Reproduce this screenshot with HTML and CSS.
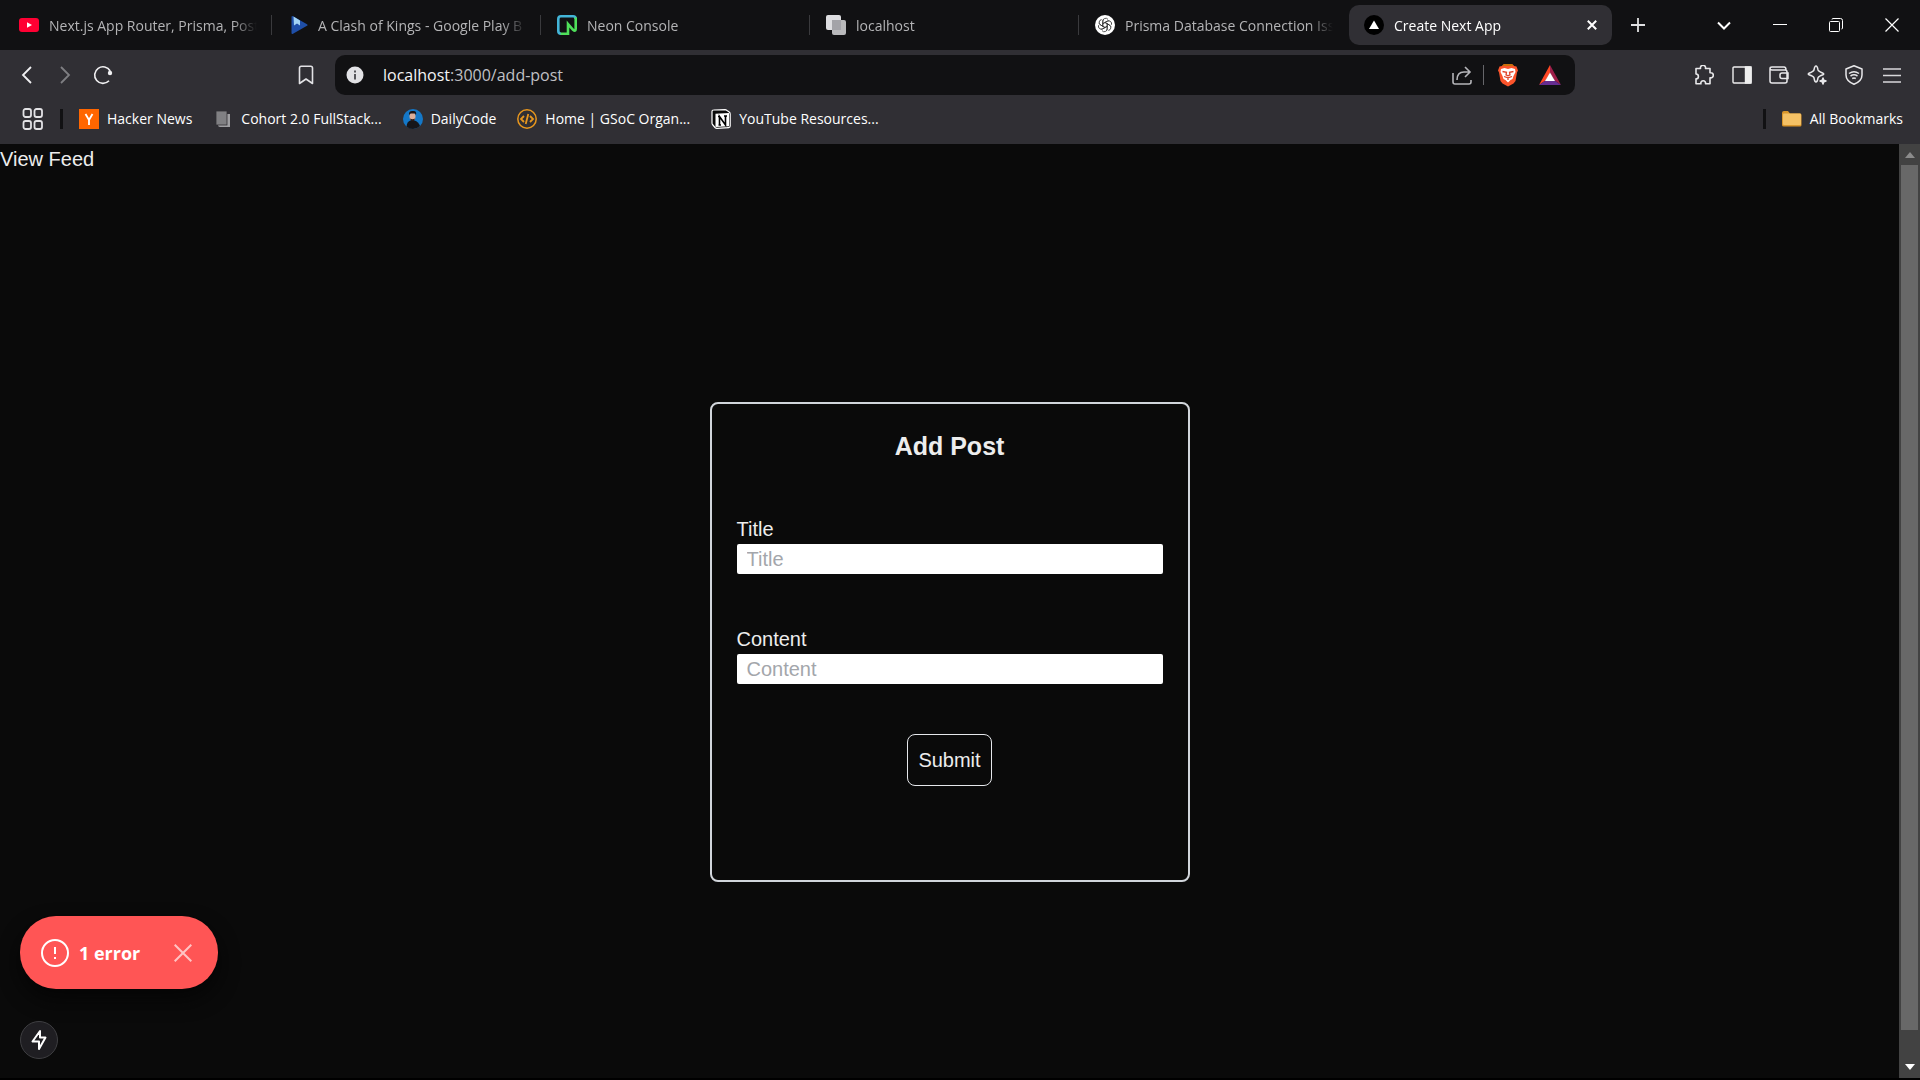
FILE: index.html
```html
<!DOCTYPE html>
<html lang="en">
<head>
    <meta charset="UTF-8">
    <meta name="viewport" content="width=device-width, initial-scale=1.0">
    <title>Create Next App</title>
    <link rel="stylesheet" href="styles.css">
</head>
<body>
    <div class="browser">

        <!-- tab strip -->
        <header class="tab-strip">
            <ul class="tabs">
                <li class="tab">
                    <a href="#" class="tab-body">
                        <svg class="favicon" viewBox="0 0 20 20"><rect y="3" width="20" height="14" rx="3" fill="#ff0033"/><path d="M8 7.2l5 2.8-5 2.8z" fill="#fff"/></svg>
                        <span class="tab-title">Next.js App Router, Prisma, Post</span>
                    </a>
                    <span class="tab-divider"></span>
                </li>
                <li class="tab">
                    <a href="#" class="tab-body">
                        <svg class="favicon" viewBox="0 0 20 20"><path d="M3.500 2Q3.500 .6 5 1.200l14 8q1.200 .8 0 1.600l-14 8Q3.500 19.400 3.500 18z" fill="#1f4fa8"/><path d="M5.500 1.500l6.500 4v5L9 8.500l-3 2z" fill="#a3d4f5"/></svg>
                        <span class="tab-title">A Clash of Kings - Google Play B</span>
                    </a>
                    <span class="tab-divider"></span>
                </li>
                <li class="tab">
                    <a href="#" class="tab-body">
                        <svg class="favicon" viewBox="0 0 20 20" fill="none" stroke-width="2.600"><path d="M4 18.700Q1.300 18.700 1.300 16V4Q1.300 1.300 4 1.300h12q2.700 0 2.700 2.700" stroke="#43b5d8"/><path d="M3.500 18.700h7.500V9l5 5.800q2.700 2.200 2.700-1V2.500" stroke="#4fe05a"/></svg>
                        <span class="tab-title">Neon Console</span>
                    </a>
                    <span class="tab-divider"></span>
                </li>
                <li class="tab">
                    <a href="#" class="tab-body">
                        <svg class="favicon" viewBox="0 0 20 20"><rect width="15" height="15" rx="2" fill="#dddde0"/><rect x="6" y="5" width="14" height="15" rx="2" fill="#b9b9bb"/><rect x="6" y="5" width="9" height="10" fill="#a3a3a8"/></svg>
                        <span class="tab-title">localhost</span>
                    </a>
                    <span class="tab-divider"></span>
                </li>
                <li class="tab">
                    <a href="#" class="tab-body">
                        <svg class="favicon" viewBox="0 0 20 20"><circle cx="10" cy="10" r="10" fill="#fff"/><g fill="none" stroke="#333" stroke-width=".8"><path id="knot" d="M7.800 11.300V6.200a2.900 2.900 0 0 1 5.200-1.800M7.800 8.700L12.200 6.200a2.900 2.900 0 0 1 2 -.3"/><use href="#knot" transform="rotate(60 10 10)"/><use href="#knot" transform="rotate(120 10 10)"/><use href="#knot" transform="rotate(180 10 10)"/><use href="#knot" transform="rotate(240 10 10)"/><use href="#knot" transform="rotate(300 10 10)"/></g></svg>
                        <span class="tab-title">Prisma Database Connection Iss</span>
                    </a>
                </li>
                <li class="tab active">
                    <a href="#" class="tab-body">
                        <svg class="favicon" viewBox="0 0 20 20"><circle cx="10" cy="10" r="10" fill="#000"/><path d="M10 5.500l5 8.500H5z" fill="#fff"/></svg>
                        <span class="tab-title">Create Next App</span>
                        <svg class="tab-close" viewBox="0 0 10 10" fill="none" stroke="#fff" stroke-width="2"><path d="M.8.8l8.400 8.400M9.200.8L.8 9.200"/></svg>
                    </a>
                </li>
            </ul>
            <button class="new-tab" aria-label="New tab">
                <svg width="14" height="14" viewBox="0 0 14 14" stroke="#e0e0e2" stroke-width="1.800"><path d="M7 0v14M0 7h14"/></svg>
            </button>
            <div class="window-controls">
                <button aria-label="Search tabs"><svg width="14" height="14" viewBox="0 0 14 14" fill="none" stroke="#fff" stroke-width="2"><path d="M1 4.500l6 6 6-6"/></svg></button>
                <button aria-label="Minimize"><svg width="14" height="14" viewBox="0 0 14 14" stroke="#fff"><path d="M0 6.500h14"/></svg></button>
                <button aria-label="Restore"><svg width="14" height="14" viewBox="0 0 14 14" fill="none" stroke="#fff"><rect x=".5" y="3.500" width="10" height="10" rx="1"/><path d="M3 1.500Q3 .5 4 .5h7.500q2 0 2 2V10q0 1-1 1"/></svg></button>
                <button aria-label="Close"><svg width="14" height="14" viewBox="0 0 14 14" stroke="#fff" stroke-width="1.200"><path d="M.5.5l13 13M13.500.5l-13 13"/></svg></button>
            </div>
        </header>

        <!-- address bar row -->
        <div class="toolbar">
            <div class="nav-buttons">
                <button aria-label="Back"><svg width="20" height="20" viewBox="0 0 20 20" fill="none" stroke="#f0f0f2" stroke-width="1.800"><path d="M14 2L6 10l8 8"/></svg></button>
                <button aria-label="Forward"><svg width="20" height="20" viewBox="0 0 20 20" fill="none" stroke="#7f7f83" stroke-width="1.800"><path d="M6 2l8 8-8 8"/></svg></button>
                <button aria-label="Reload"><svg width="20" height="20" viewBox="0 0 20 20" fill="none" stroke="#f0f0f2" stroke-width="1.600"><path d="M17.200 6A8.300 8.300 0 1 0 16 15.800"/><circle cx="17" cy="8" r="2.200" fill="#f0f0f2" stroke="none"/></svg></button>
            </div>
            <button class="bookmark-button" aria-label="Bookmark this page"><svg width="20" height="20" viewBox="0 0 20 20" fill="none" stroke="#e2e2e5" stroke-width="1.600"><path d="M3.500 18.500V3q0-1.800 1.800-1.800h9.400q1.800 0 1.800 1.800v15.500L10 14z" stroke-linejoin="round"/></svg></button>
            <div class="address-bar">
                <svg class="site-info" width="18" height="18" viewBox="0 0 18 18"><circle cx="9" cy="9" r="8.500" fill="#e2e2e5"/><path d="M8 4.500h2v2H8zM8 8h2v5.500H8z" fill="#55555a"/></svg>
                <div class="url" contenteditable="true" role="textbox" aria-label="Address">localhost<span>:3000/add-post</span></div>
                <svg width="20" height="20" viewBox="0 0 20 20" fill="none" stroke="#b5b5b9" stroke-width="1.600"><path d="M1 8v9q0 2 2 2h14q2 0 2-2v-2M5 15q0-8 7-8h6M13 2l5 5-5 5"/></svg>
                <span class="address-divider"></span>
                <svg class="lion" width="20" height="24" viewBox="0 0 20 24"><path d="M6 1h8l2 2 2.500.5 1.500 4-1 2-1.500 8.500-2 2.500L10 23.500l-5.500-3-2-2.500L1 9.500l-1-2 1.500-4L4 3z" fill="#fb542b"/><path d="M6 1h8l2 2H4z" fill="#c9700a"/><path d="M3 6l3.500-1L10 6l3.500-1L17 6l.5 3-2 4-1 3-2 1L10 19.500 7.500 17l-2-1-1-3-2-4z" fill="#fff"/><path d="M4.500 8.500l4 .8-.5 2.500 2 1 2-1-.5-2.500 4-.8M6 13.500l4 1.300 4-1.300M10 14.500V17" fill="none" stroke="#e0442a" stroke-width="1.300"/></svg>
                <svg class="bat" width="22" height="20" viewBox="0 0 22 20"><path d="M11 0v8L6.500 15.500 0 20z" fill="#ff4724"/><path d="M11 0l11 20-6.500-4.500L11 8z" fill="#9e1f4a"/><path d="M0 20l6.500-4.500h9L22 20z" fill="#662d91"/><path d="M11 7.500l5 8.500H6z" fill="#fff"/></svg>
            </div>
            <div class="toolbar-actions">
                <button aria-label="Extensions"><svg width="20" height="20" viewBox="0 0 20 20" fill="none" stroke="#e8e8ea" stroke-width="1.600" stroke-linejoin="round"><path d="M2 3.500h4.500a2.600 2.600 0 1 1 5 0H16v4.300a2.600 2.600 0 1 1 0 5v6h-4.500a2.400 2.400 0 1 0-4.600 0H2v-5a2.400 2.400 0 1 0 0-4.800z"/></svg></button>
                <button aria-label="Side panel"><svg width="20" height="20" viewBox="0 0 20 20" fill="none" stroke="#eee" stroke-width="1.400"><rect x="1" y="2" width="18" height="16" rx="1"/><path d="M13.500 2H19v16h-5.500z" fill="#eee"/></svg></button>
                <button aria-label="Wallet"><svg width="20" height="20" viewBox="0 0 20 20" fill="none" stroke="#e8e8ea" stroke-width="1.500"><path d="M1 4v12q0 2 2 2h13q2 0 2-2V7q0-2-2-2H3Q1 5 1 3.500T3 2h12q2 0 2 3M19 8h-6q-2 0-2 2v1.500q0 2 2 2h6z"/></svg></button>
                <button aria-label="Leo AI"><svg width="20" height="20" viewBox="0 0 20 20" fill="none" stroke="#e8e8ea" stroke-width="1.500" stroke-linejoin="round"><path d="M9 1q1.400 0 2 4 .7 1.500 5 3.200 1.500.8 0 1.600-4.300 1.500-5 3-.6 4.200-2 4.200t-2-4.200Q6.500 11.300 2 9.800q-1.500-.8 0-1.600Q6.500 6.500 7 5q.6-4 2-4z"/><path d="M16 13l.8 2.200L19 16l-2.200.8L16 19l-.8-2.200L13 16l2.200-.8z" fill="#e8e8ea"/></svg></button>
                <button aria-label="VPN"><svg width="20" height="20" viewBox="0 0 20 20" fill="none" stroke="#e8e8ea" stroke-width="1.500"><path d="M10 .8L18 4v6q0 6-8 9.300Q2 16 2 10V4z" stroke-linejoin="round"/><path d="M5 8.500q5-3.500 10 0M6.500 11q3.500-2.300 7 0M8.200 13.500q1.800-1 3.600 0"/></svg></button>
                <button aria-label="Menu"><svg width="20" height="20" viewBox="0 0 20 20" stroke="#d8d8da" stroke-width="1.600"><path d="M1 4h18M1 10.500h18M1 17h18"/></svg></button>
            </div>
        </div>

        <!-- bookmarks row -->
        <nav class="bookmarks">
            <button class="apps" aria-label="Apps"><svg width="22" height="22" viewBox="0 0 22 22" fill="none" stroke="#e2e2e5" stroke-width="1.800"><rect x="1.500" y="1" width="7.500" height="8" rx="2"/><rect x="12.500" y="1" width="7.500" height="8" rx="2"/><rect x="1.500" y="13" width="7.500" height="8" rx="2"/><rect x="12.500" y="13" width="7.500" height="8" rx="2"/></svg></button>
            <span class="bookmark-divider"></span>
            <a href="#"><svg class="favicon" viewBox="0 0 20 20"><rect width="20" height="20" fill="#ff6600"/><path d="M6.500 5l3.500 6 3.500-6M10 11v5" fill="none" stroke="#fff" stroke-width="1.800"/></svg>Hacker News</a>
            <a href="#"><svg class="favicon" viewBox="0 0 20 20"><path d="M5 5h12v13H7q-2 0-2-2z" fill="#a0a0a3"/><rect x="3" y="2" width="11" height="14" fill="#808083" stroke="#302f34" stroke-width=".8"/></svg>Cohort 2.0 FullStack...</a>
            <a href="#"><svg class="favicon" viewBox="0 0 20 20"><circle cx="10" cy="10" r="10" fill="#1478c8"/><path d="M3.500 17.500q.5-5 4-6h4q4 1 5.500 5.500-3 3-7 3t-6.500-2.500z" fill="#16161a"/><ellipse cx="9.500" cy="7.500" rx="3" ry="4" fill="#dcae98"/><path d="M6 6q-.5-4.500 4-4 4-.5 3 4l-1-1.500H7.500z" fill="#1b1414"/><path d="M7 9.500q2.500 1.500 5 0l-1 2.500H8z" fill="#2a1c1a"/></svg>DailyCode</a>
            <a href="#"><svg class="favicon" viewBox="0 0 20 20" fill="none" stroke="#e8971e" stroke-width="1.500"><circle cx="10" cy="10" r="9.200"/><path d="M7 7l-3 3 3 3M13 7l3 3-3 3M11.300 5L8.700 15" stroke-width="1.800"/></svg>Home | GSoC Organ...</a>
            <a href="#"><svg class="favicon" viewBox="0 0 20 20"><path d="M1 2.500Q1 1 2.500 1L14 .7q1 0 2 .8L18.200 3q1 .7 1 2v12q0 1.500-1.500 1.600L6 19.400q-1.200 0-2-.9L1.500 15.500Q1 15 1 14z" fill="#0a0a0a" stroke="#fff" stroke-width="1.200"/><path d="M4.500 4.800L18 4v13.300l-13.500.8z" fill="#fff"/><path d="M8.500 16V7.500l6 8.500V7M7 7.500h2M7.500 16H10M13 7H16" fill="none" stroke="#000" stroke-width="1.600"/></svg>YouTube Resources...</a>
            <span class="bookmark-divider push"></span>
            <a href="#" class="all-bookmarks"><svg class="favicon" viewBox="0 0 20 20"><path d="M0 4q0-2 2-2h4l2 2.500h10q1.500 0 1.500 1.500v10q0 1.500-1.500 1.500H2Q0 17.500 0 16z" fill="#d9962b"/><path d="M1 5.500q0-1 1-1h16q1 0 1 1V15q0 1-1 1H2q-1 0-1-1z" fill="#f4c165"/></svg>All Bookmarks</a>
        </nav>

        <!-- page -->
        <div class="viewport">
            <main class="page">
                <a href="#" class="feed-link">View Feed</a>
                <div class="form-wrap">
                    <form class="card">
                        <h1>Add Post</h1>
                        <div class="field">
                            <label for="title">Title</label>
                            <input type="text" id="title" placeholder="Title">
                        </div>
                        <div class="field">
                            <label for="content">Content</label>
                            <input type="text" id="content" placeholder="Content">
                        </div>
                        <button type="submit" class="submit">Submit</button>
                    </form>
                </div>
            </main>
            <div class="scrollbar">
                <svg width="10" height="6" viewBox="0 0 10 6"><path d="M5 0l5 6H0z" fill="#8c8c8c"/></svg>
                <div class="thumb"></div>
                <svg width="10" height="6" viewBox="0 0 10 6"><path d="M0 0h10L5 6z" fill="#fff"/></svg>
            </div>

            <div class="dev-overlay">
                <div class="toast">
                    <svg width="28" height="28" viewBox="0 0 28 28" fill="none" stroke="#fff" stroke-width="2"><circle cx="14" cy="14" r="13"/><path d="M14 8v7M14 18v2"/></svg>
                    <span class="toast-text">1 error</span>
                    <button aria-label="Hide errors"><svg width="18" height="18" viewBox="0 0 18 18" stroke="#ffc4c4" stroke-width="2"><path d="M.7.7l16.600 16.600M17.300.7L.7 17.300"/></svg></button>
                </div>
                <button class="indicator" aria-label="Static route"><svg width="18" height="22" viewBox="0 0 18 22" fill="none" stroke="#fff" stroke-width="2"><path d="M10 2L2.500 12.500H9V20l6.500-11.500H10z" stroke-linejoin="round"/></svg></button>
            </div>
            <div class="screen-edge"></div>
        </div>
    </div>
</body>
</html>
```
FILE: styles.css
```css
* {
    box-sizing: border-box;
}

body, html {
    height: 100%;
    margin: 0;
    overflow: hidden;
    background: #0a0a0a;
}

body {
    font-family: "Open Sans", "Noto Sans", sans-serif;
    font-size: 14px;
    color: #fff;
}

button {
    display: flex;
    align-items: center;
    justify-content: center;
    padding: 0;
    border: none;
    background: none;
    color: inherit;
    font: inherit;
}

a {
    color: inherit;
    text-decoration: none;
}

svg {
    flex: none;
}

.browser {
    display: flex;
    flex-direction: column;
    height: 100%;
}

.favicon {
    width: 20px;
    height: 20px;
}

/* Tabs */
.tab-strip {
    display: flex;
    align-items: center;
    height: 50px;
    padding-left: 4px;
    background: #111113;
}

.tabs {
    display: flex;
    flex: 0 1 1614px;
    min-width: 0;
    margin: 0;
    padding: 0;
    list-style: none;
}

.tab {
    display: flex;
    align-items: center;
    flex: 0 1 269px;
    min-width: 0;
    padding-right: 6px;
    color: #b4b4b6;
}

.tab:has(.tab-divider) {
    padding-right: 0;
}

.tab-body {
    display: flex;
    align-items: center;
    gap: 10px;
    flex: 1;
    min-width: 0;
    height: 40px;
    padding: 0 10px 0 15px;
    border-radius: 10px;
}

.tab-title {
    flex: 1;
    overflow: hidden;
    white-space: nowrap;
    mask-image: linear-gradient(to left, transparent, #000 24px);
}

.tab-divider {
    width: 1px;
    height: 20px;
    margin: 0 1px 0 4px;
    background: #3a3a3d;
}

.tab.active {
    color: #fff;
}

.active .tab-body {
    padding-right: 15px;
    background: #302f34;
}

.tab-close {
    width: 10px;
    height: 10px;
}

.new-tab {
    width: 40px;
    height: 40px;
}

.window-controls {
    display: flex;
    margin-left: auto;
}

.window-controls button {
    width: 56px;
    height: 50px;
}

/* Toolbar */
.toolbar {
    display: flex;
    align-items: center;
    height: 50px;
    padding: 0 14px 0 8px;
    background: #302f34;
}

.nav-buttons {
    display: flex;
}

.nav-buttons button {
    width: 38px;
    height: 38px;
}

.bookmark-button {
    width: 38px;
    height: 38px;
    margin-left: 165px;
}

.address-bar {
    display: flex;
    align-items: center;
    flex: 1;
    height: 40px;
    margin: 0 115px 0 10px;
    padding: 0 14px 0 11px;
    border-radius: 10px;
    background: #111113;
}

.url {
    flex: 1;
    margin-left: 19px;
    font-size: 16px;
    color: #f4f4f6;
}

.url span {
    color: #c0c0c4;
}

.address-divider {
    width: 1px;
    height: 20px;
    margin: 0 14px 0 11px;
    background: #66666a;
}

.bat {
    margin-left: 21px;
}

.toolbar-actions {
    display: flex;
    justify-content: space-between;
    width: 216px;
}

.toolbar-actions button {
    width: 28px;
    height: 38px;
}

/* Bookmarks */
.bookmarks {
    display: flex;
    align-items: center;
    gap: 21px;
    height: 44px;
    padding: 0 17px 7px 22px;
    background: #302f34;
}

.bookmarks a {
    display: flex;
    align-items: center;
    gap: 8px;
    white-space: nowrap;
}

.bookmark-divider {
    width: 3px;
    height: 20px;
    margin: 0 -5px;
    background: #111113;
}

.push {
    margin-left: auto;
}

/* Page */
.viewport {
    position: relative;
    display: flex;
    flex: 1;
    min-height: 0;
    font-family: "Liberation Sans", Arial, sans-serif;
    font-size: 20px;
    line-height: 30px;
    color: #ededed;
}

.page {
    flex: 1;
    overflow: hidden;
}

.feed-link {
    display: block;
}

.form-wrap {
    display: flex;
    align-items: center;
    justify-content: center;
    height: 100%;
}

.card {
    display: flex;
    flex-direction: column;
    align-items: center;
    gap: 50px;
    width: 480px;
    min-height: 480px;
    padding: 25px;
    border: 2px solid #d1d5db;
    border-radius: 8px;
}

.card h1 {
    margin: 0;
    font-size: 25px;
    line-height: 35px;
}

.field {
    display: flex;
    flex-direction: column;
    width: 100%;
}

.field input {
    height: 30px;
    padding: 0 10px;
    border: none;
    border-radius: 2px;
    background: #fff;
    color: #000;
    font: inherit;
}

.field input::placeholder {
    color: #a3a6ab;
}

.submit {
    padding: 10px;
    border: 1px solid #e5e7eb;
    border-radius: 8px;
}

.scrollbar {
    display: flex;
    flex-direction: column;
    align-items: center;
    width: 21px;
    padding: 8px 0 10px;
    background: #424242;
}

.thumb {
    flex: 1;
    width: 17px;
    margin: 7px 0 34px;
    background: #686868;
}

/* Next.js dev overlay */
.dev-overlay {
    position: absolute;
    left: 20px;
    bottom: 21px;
    font-family: "Open Sans", "Noto Sans", sans-serif;
}

.toast {
    display: flex;
    align-items: center;
    width: 198px;
    height: 73px;
    padding: 0 26px 0 21px;
    border-radius: 36px;
    background: #ff5555;
    box-shadow: 0 10px 20px #050505;
    color: #fff;
}

.toast-text {
    flex: 1;
    margin-left: 10px;
    font-size: 18px;
    font-weight: 700;
}

.indicator {
    width: 38px;
    height: 38px;
    margin-top: 32px;
    border: 1px solid #3f3f42;
    border-radius: 50%;
    background: #1f1e22;
}

.screen-edge {
    position: absolute;
    right: 0;
    bottom: 0;
    left: 0;
    height: 2px;
    background: #000;
}
```
